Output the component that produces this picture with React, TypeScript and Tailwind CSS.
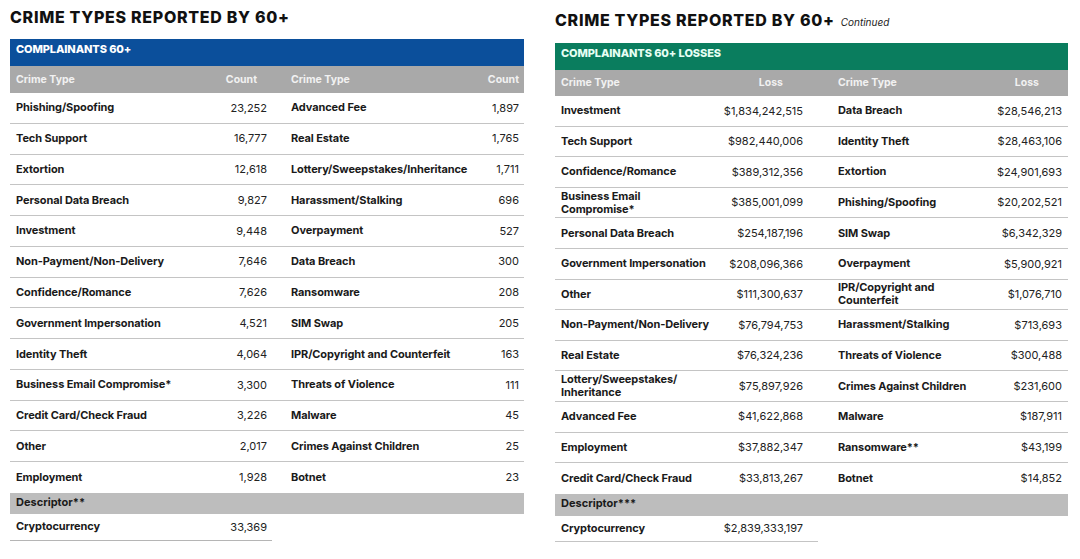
import React from "react";

type Row = [string, string, string, string];

const leftRows: Row[] = [
  ["Phishing/Spoofing", "23,252", "Advanced Fee", "1,897"],
  ["Tech Support", "16,777", "Real Estate", "1,765"],
  ["Extortion", "12,618", "Lottery/Sweepstakes/Inheritance", "1,711"],
  ["Personal Data Breach", "9,827", "Harassment/Stalking", "696"],
  ["Investment", "9,448", "Overpayment", "527"],
  ["Non-Payment/Non-Delivery", "7,646", "Data Breach", "300"],
  ["Confidence/Romance", "7,626", "Ransomware", "208"],
  ["Government Impersonation", "4,521", "SIM Swap", "205"],
  ["Identity Theft", "4,064", "IPR/Copyright and Counterfeit", "163"],
  ["Business Email Compromise*", "3,300", "Threats of Violence", "111"],
  ["Credit Card/Check Fraud", "3,226", "Malware", "45"],
  ["Other", "2,017", "Crimes Against Children", "25"],
  ["Employment", "1,928", "Botnet", "23"],
];

const rightRows: Row[] = [
  ["Investment", "$1,834,242,515", "Data Breach", "$28,546,213"],
  ["Tech Support", "$982,440,006", "Identity Theft", "$28,463,106"],
  ["Confidence/Romance", "$389,312,356", "Extortion", "$24,901,693"],
  ["Business Email\nCompromise*", "$385,001,099", "Phishing/Spoofing", "$20,202,521"],
  ["Personal Data Breach", "$254,187,196", "SIM Swap", "$6,342,329"],
  ["Government Impersonation", "$208,096,366", "Overpayment", "$5,900,921"],
  ["Other", "$111,300,637", "IPR/Copyright and\nCounterfeit", "$1,076,710"],
  ["Non-Payment/Non-Delivery", "$76,794,753", "Harassment/Stalking", "$713,693"],
  ["Real Estate", "$76,324,236", "Threats of Violence", "$300,488"],
  ["Lottery/Sweepstakes/\nInheritance", "$75,897,926", "Crimes Against Children", "$231,600"],
  ["Advanced Fee", "$41,622,868", "Malware", "$187,911"],
  ["Employment", "$37,882,347", "Ransomware**", "$43,199"],
  ["Credit Card/Check Fraud", "$33,813,267", "Botnet", "$14,852"],
];

function Label({ text }: { text: string }) {
  const parts = text.split("\n");
  return (
    <span className="font-bold text-[#1a1a1a] leading-[13px] tracking-[-0.1px]">
      {parts.map((p, i) => (
        <React.Fragment key={i}>
          {i > 0 && <br />}
          {p}
        </React.Fragment>
      ))}
    </span>
  );
}

export default function App() {
  const font = { fontFamily: "Inter, 'Liberation Sans', Arial, sans-serif" };
  return (
    <div className="w-[1080px] h-[559px] bg-white flex text-[11px]" style={font}>
      {/* LEFT */}
      <div className="w-[545px] pl-[10px] pt-[7px] flex flex-col">
        <div className="h-[20px] text-[16px] leading-[20px] font-extrabold tracking-[0.7px] text-[#111] whitespace-nowrap">
          CRIME TYPES REPORTED BY 60+
        </div>
        <div className="mt-[12px] w-[514px] flex flex-col">
          <div className="h-[27px] bg-[#0b4f9b] pl-[6px] pt-[3px] text-white font-extrabold text-[11px] leading-[14px] tracking-[-0.1px]">
            COMPLAINANTS 60+
          </div>
          <div className="h-[27px] bg-[#a9a9a9] flex items-center text-[#f1f1f1] font-bold text-[10.5px]">
            <div className="w-[262px] flex justify-between pl-[6px] pr-[15px]">
              <span>Crime Type</span>
              <span>Count</span>
            </div>
            <div className="w-[252px] flex justify-between pl-[19px] pr-[5px]">
              <span>Crime Type</span>
              <span>Count</span>
            </div>
          </div>
          {leftRows.map((r, i) => (
            <div
              key={i}
              className={`h-[30.77px] flex items-center ${i < leftRows.length - 1 ? "border-b-[1.5px] border-[#c4c4c4]" : ""}`}
            >
              <div className="w-[262px] flex justify-between items-center pl-[6px] pr-[5px]">
                <Label text={r[0]} />
                <span className="text-[#222]">{r[1]}</span>
              </div>
              <div className="w-[252px] flex justify-between items-center pl-[19px] pr-[5px]">
                <Label text={r[2]} />
                <span className="text-[#222]">{r[3]}</span>
              </div>
            </div>
          ))}
          <div className="h-[21px] bg-[#bdbdbd] pl-[6px] pt-[2px] font-bold text-[#1a1a1a] leading-[14px]">
            Descriptor**
          </div>
          <div className="h-[27px] w-[262px] flex justify-between items-center pl-[6px] pr-[5px] border-b-[1.5px] border-[#b5b5b5]">
            <Label text="Cryptocurrency" />
            <span className="text-[#222]">33,369</span>
          </div>
        </div>
      </div>

      {/* RIGHT */}
      <div className="flex-1 pl-[10px] pt-[10px] flex flex-col">
        <div className="h-[20px] flex items-baseline whitespace-nowrap">
          <span className="text-[16px] leading-[20px] font-extrabold tracking-[0.7px] text-[#111]">
            CRIME TYPES REPORTED BY 60+
          </span>
          <span className="ml-[6px] text-[10px] italic text-[#222]">Continued</span>
        </div>
        <div className="mt-[13px] w-[513px] flex flex-col">
          <div className="h-[27px] bg-[#0a7d5e] pl-[6px] pt-[3px] text-[#e6fff4] font-extrabold text-[11px] leading-[14px] tracking-[-0.1px]">
            COMPLAINANTS 60+ LOSSES
          </div>
          <div className="h-[26px] bg-[#a9a9a9] flex items-center text-[#f1f1f1] font-bold text-[10.5px]">
            <div className="w-[263px] flex justify-between pl-[6px] pr-[35px]">
              <span>Crime Type</span>
              <span>Loss</span>
            </div>
            <div className="w-[250px] flex justify-between pl-[20px] pr-[29px]">
              <span>Crime Type</span>
              <span>Loss</span>
            </div>
          </div>
          {rightRows.map((r, i) => (
            <div
              key={i}
              className={`h-[30.6px] flex items-center ${i < rightRows.length - 1 ? "border-b-[1.5px] border-[#c4c4c4]" : ""}`}
            >
              <div className="w-[263px] flex justify-between items-center pl-[6px] pr-[15px]">
                <Label text={r[0]} />
                <span className="text-[#222]">{r[1]}</span>
              </div>
              <div className="w-[250px] flex justify-between items-center pl-[20px] pr-[6px]">
                <Label text={r[2]} />
                <span className="text-[#222]">{r[3]}</span>
              </div>
            </div>
          ))}
          <div className="h-[22px] bg-[#bdbdbd] pl-[6px] pt-[2px] font-bold text-[#1a1a1a] leading-[14px]">
            Descriptor***
          </div>
          <div className="h-[26px] w-[263px] flex justify-between items-center pl-[6px] pr-[15px] border-b-[1.5px] border-[#c4c4c4]">
            <Label text="Cryptocurrency" />
            <span className="text-[#222]">$2,839,333,197</span>
          </div>
        </div>
      </div>
    </div>
  );
}
